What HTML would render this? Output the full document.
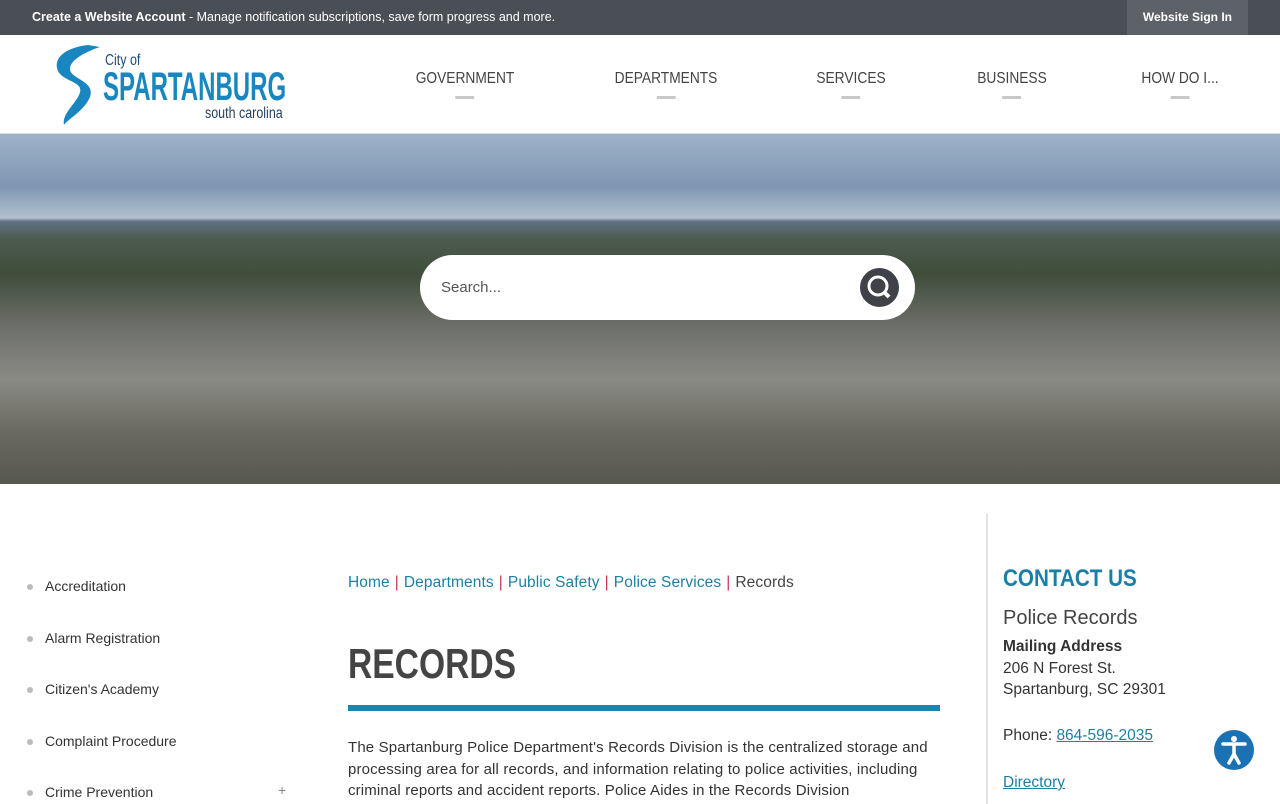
<!DOCTYPE html>
<html><head><meta charset="utf-8"><style>
*{margin:0;padding:0;box-sizing:border-box}
body{width:1280px;height:800px;overflow:hidden;font-family:"Liberation Sans",sans-serif;background:#fff;position:relative}
.top{height:35px;background:#4a4e55;color:#fff;font-size:12.5px;line-height:35px;padding-left:32px;position:relative}
.sign{position:absolute;right:32px;top:0;height:35px;background:#5d6168;padding:0 16px;font-size:12px;font-weight:bold}
.hdr{height:99px;position:relative;border-bottom:1px solid #ddd}
.nav{position:absolute;top:35px;font-size:16px;color:#444;transform:translate(-50%,0) scaleX(.86);white-space:nowrap}
.nav:after{content:"";display:block;width:22px;height:3px;background:#c8c8c8;margin:8px auto 0}
.nar{transform-origin:0 0;transform:scaleX(.78);white-space:nowrap;position:absolute}
.hero{position:absolute;top:134px;left:0;width:1280px;height:350px;background:linear-gradient(180deg,#9fb2c9 0%,#7f96b3 15%,#b3c0cf 24%,#5f7184 25%,#4d5b4f 30%,#3f4d3a 40%,#6d6f6a 55%,#8a8a85 70%,#6b6a62 85%,#56574f 100%)}
.search{position:absolute;left:420px;top:255px;width:495px;height:65px;border-radius:33px;background:#fff;font-size:15px;color:#555;line-height:65px;padding-left:21px}
.sbtn{position:absolute;right:16px;top:13px;width:39px;height:39px;border-radius:50%;background:#3f4248}
.side{position:absolute;left:27px;font-size:14px;color:#333}
.side:before{content:"";position:absolute;left:0;top:6px;width:6px;height:6px;border-radius:50%;background:#bbb}
.side span{margin-left:18px}
.bc{position:absolute;left:348px;top:574px;font-size:15.5px;color:#444;letter-spacing:.1px}
.bc a{color:#1f7fa3;text-decoration:none}.bc i{color:#c7325a;font-style:normal;margin:0 5px}
.bar{position:absolute;left:348px;top:705px;width:592px;height:6px;background:#1a86b0}
.body{position:absolute;left:348px;top:737px;width:580px;font-size:15px;line-height:21.5px;color:#333;letter-spacing:.15px}
.vr{position:absolute;left:986px;top:514px;width:2px;height:290px;background:#e3e3e3}
.r{position:absolute;left:1003px;color:#333;font-size:15.5px}
.r a{color:#1f7fa3;text-decoration:underline}
.acc{position:absolute;left:1214px;top:730px;width:40px;height:40px;border-radius:50%;background:#1a72b5}
</style></head><body>
<div class="top"><b>Create a Website Account</b> - Manage notification subscriptions, save form progress and more.<div class="sign">Website Sign In</div></div>
<div class="hdr">
<svg style="position:absolute;left:48px;top:6px" width="60" height="88" viewBox="0 0 60 88"><path d="M40 4 C20 6 4 16 10 30 C16 42 40 40 30 56 C24 66 14 74 16 84 C20 78 36 70 42 56 C48 40 22 38 22 28 C22 18 40 10 52 6 Z" fill="#1a86bf"/></svg>
<div class="nar" style="left:105px;top:17px;font-size:16px;color:#1f4f78">City of</div>
<div class="nar" style="left:103px;top:32px;font-size:40px;font-weight:bold;color:#1a86bf;line-height:40px;transform:scaleX(.6)">SPARTANBURG</div>
<div class="nar" style="left:205px;top:70px;font-size:16px;color:#1f3f5f">south carolina</div>
<div class="nav" style="left:465px">GOVERNMENT</div>
<div class="nav" style="left:666px">DEPARTMENTS</div>
<div class="nav" style="left:851px">SERVICES</div>
<div class="nav" style="left:1012px">BUSINESS</div>
<div class="nav" style="left:1180px">HOW DO I...</div>
</div>
<div class="hero"></div>
<div class="search">Search...<div class="sbtn"><svg width="39" height="39"><circle cx="18" cy="18" r="9" fill="none" stroke="#fff" stroke-width="3"/><path d="M24 24 L29 29" stroke="#fff" stroke-width="4"/></svg></div></div>
<div class="side" style="top:578px"><span>Accreditation</span></div>
<div class="side" style="top:630px"><span>Alarm Registration</span></div>
<div class="side" style="top:681px"><span>Citizen's Academy</span></div>
<div class="side" style="top:733px"><span>Complaint Procedure</span></div>
<div class="side" style="top:784px"><span>Crime Prevention</span></div>
<div style="position:absolute;left:278px;top:782px;color:#888;font-size:14px">+</div>
<div class="bc"><a>Home</a><i>|</i><a>Departments</a><i>|</i><a>Public Safety</a><i>|</i><a>Police Services</a><i>|</i>Records</div>
<div class="nar" style="left:348px;top:640px;font-size:42px;color:#444;font-weight:bold;transform:scaleX(.8)">RECORDS</div>
<div class="bar"></div>
<div class="body">The Spartanburg Police Department's Records Division is the centralized storage and processing area for all records, and information relating to police activities, including criminal reports and accident reports. Police Aides in the Records Division</div>
<div class="vr"></div>
<div class="nar" style="left:1003px;top:565px;font-size:24px;font-weight:bold;color:#1a7fa8;transform:scaleX(.86)">CONTACT US</div>
<div class="r" style="top:607px;font-size:20px;color:#444">Police Records</div>
<div class="r" style="top:638px;font-weight:bold">Mailing Address</div>
<div class="r" style="top:660px">206 N Forest St.</div>
<div class="r" style="top:681px">Spartanburg, SC 29301</div>
<div class="r" style="top:727px">Phone: <a>864-596-2035</a></div>
<div class="r" style="top:774px"><a>Directory</a></div>
<div class="acc"><svg width="40" height="40"><circle cx="20" cy="9" r="3" fill="#fff"/><path d="M9 14 L31 14 M20 14 L20 24 M20 24 L15 33 M20 24 L25 33" stroke="#fff" stroke-width="3.5" fill="none" stroke-linecap="round"/></svg></div>
</body></html>
